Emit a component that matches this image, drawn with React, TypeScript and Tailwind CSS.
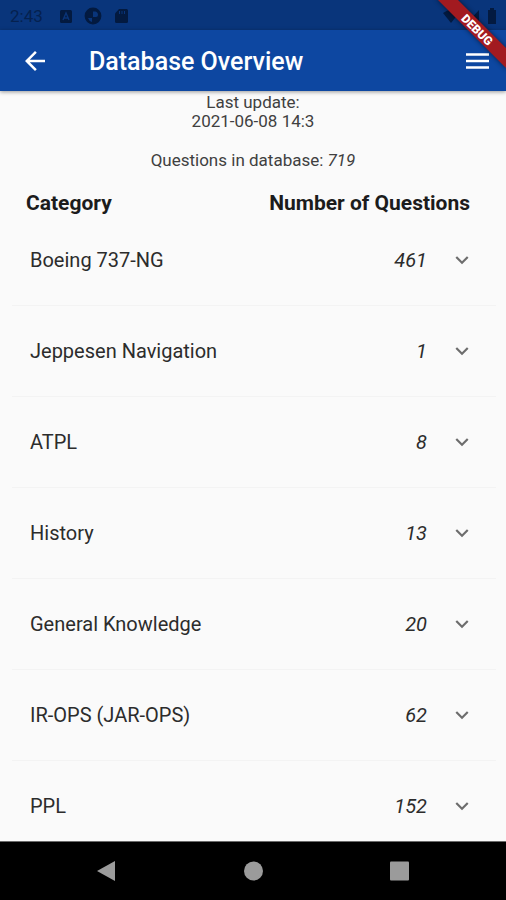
const categories = [
  { name: "Boeing 737-NG", count: 461 },
  { name: "Jeppesen Navigation", count: 1 },
  { name: "ATPL", count: 8 },
  { name: "History", count: 13 },
  { name: "General Knowledge", count: 20 },
  { name: "IR-OPS (JAR-OPS)", count: 62 },
  { name: "PPL", count: 152 },
];

function StatusBar() {
  return (
    <div className="flex h-[30px] shrink-0 items-center bg-[#09357b] pl-[10px] pr-2 pt-px text-[#05214f]">
      <span className="w-[49px] text-[17px] leading-5">2:43</span>
      <div className="flex items-center gap-[11px]">
        <svg className="size-[14px]" viewBox="0 0 14 14" aria-hidden="true">
          <rect x="1" y="1" width="12" height="13" rx="1.5" fill="#031a40" />
          <path d="M4 11 7 4l3 7M5 9h4" fill="none" stroke="#0a3478" strokeWidth="1.4" />
        </svg>
        <svg className="size-[18px]" viewBox="0 0 18 18" aria-hidden="true">
          <circle cx="9" cy="9" r="7.6" fill="#031a40" stroke="#031a40" strokeWidth="1.6" />
          <path d="M9 4.500h2.500Q14 5 14 8q0 2-2 2H9zM4 11h4v4Q5 14 4 11z" fill="#09357b" />
        </svg>
        <svg className="size-4" viewBox="0 0 16 16" aria-hidden="true">
          <path d="M6 1h7.500Q15 1 15 2.500v11q0 1.500-1.500 1.500h-10Q2 15 2 13.500V5.500z" fill="#031a40" />
          <path d="M6.500 3v3M9 3v3M11.500 3v3" stroke="#09357b" strokeWidth="1" />
        </svg>
      </div>
      <svg className="ml-auto h-[18px] w-[56px]" viewBox="0 0 56 18" aria-hidden="true">
        <path d="M1 6Q9 0 17 6L9 16z" fill="#031a40" />
        <path d="M37 3v12H26z" fill="#031a40" />
        <path d="M46 3h2V1h4v2h2v14h-8z" fill="#031a40" />
      </svg>
    </div>
  );
}

function DebugBanner() {
  return (
    <svg
      className="pointer-events-none absolute right-0 top-0 z-20 size-[78px]"
      viewBox="0 0 78 78"
      role="img"
      aria-label="Debug"
    >
      <defs>
        <filter id="shade" x="-20%" y="-20%" width="140%" height="140%">
          <feGaussianBlur stdDeviation="2.500" />
        </filter>
      </defs>
      <path d="M8-2 80 70V50L28-2z" fill="#000" opacity=".55" filter="url(#shade)" />
      <path d="M8-2 80 70V50L28-2z" fill="#a21a20" />
      <text
        transform="translate(49 30) rotate(45)"
        y="4"
        textAnchor="middle"
        fill="#fff"
        fontFamily="Roboto, sans-serif"
        fontSize="12"
        fontWeight="900"
      >
        DEBUG
      </text>
    </svg>
  );
}

function AppBar() {
  return (
    <header className="z-10 flex h-[61px] shrink-0 items-center bg-[#0d47a1] pl-5 pr-[14px] pt-px text-white shadow-[0_1px_4px_rgba(0,0,0,0.4)]">
      <button type="button" aria-label="Back" className="size-[30px]">
        <svg viewBox="0 0 24 24" fill="currentColor" aria-hidden="true">
          <path d="M20 11H7.830l5.590-5.590L12 4l-8 8 8 8 1.410-1.410L7.830 13H20z" />
        </svg>
      </button>
      <h1 className="ml-[39px] flex-1 pt-0.5 text-[25px] font-medium leading-8">Database Overview</h1>
      <button type="button" aria-label="Open menu" className="size-[30px]">
        <svg viewBox="0 0 30 30" stroke="currentColor" strokeWidth="2.5" aria-hidden="true">
          <path d="M4 8.500h23M4 15h23M4 21.500h23" />
        </svg>
      </button>
    </header>
  );
}

function CategoryRow({ name, count }: { name: string; count: number }) {
  return (
    <li className="border-b border-[#f3f3f3]">
      <button
        type="button"
        aria-expanded="false"
        className="flex h-[90px] w-full items-center pl-[18px] pr-[21px] text-left text-[20px] leading-6"
      >
        <span className="flex-1">{name}</span>
        <em>{count}</em>
        <svg
          className="ml-[22px] size-[26px] text-[#6d6d6d]"
          viewBox="0 0 24 24"
          fill="currentColor"
          aria-hidden="true"
        >
          <path d="M16.590 8.590 12 13.170 7.410 8.590 6 10l6 6 6-6z" />
        </svg>
      </button>
    </li>
  );
}

function NavigationBar() {
  return (
    <nav className="flex h-[59px] shrink-0 items-center justify-center gap-[116px] border-t border-[#6b6b6b] bg-black text-[#9b9b9b]">
      <button type="button" aria-label="System back" className="size-[30px]">
        <svg viewBox="0 0 30 30" fill="currentColor" aria-hidden="true">
          <path d="M23 5v20L5 15z" />
        </svg>
      </button>
      <button type="button" aria-label="Home" className="size-[30px]">
        <svg viewBox="0 0 30 30" fill="currentColor" aria-hidden="true">
          <circle cx="15.500" cy="15" r="9.500" />
        </svg>
      </button>
      <button type="button" aria-label="Recent apps" className="size-[30px]">
        <svg viewBox="0 0 30 30" fill="currentColor" aria-hidden="true">
          <rect x="6" y="5.500" width="19" height="19" rx="1" />
        </svg>
      </button>
    </nav>
  );
}

export default function App() {
  return (
    <div className="relative flex h-screen flex-col overflow-hidden bg-[#fafafa] font-[Roboto,sans-serif] text-[#2c2c2c]">
      <StatusBar />
      <AppBar />
      <main className="min-h-0 flex-1 overflow-hidden">
        <div className="pt-0.5 text-center text-[17px] leading-[19px] text-[#404040]">
          <p>Last update:</p>
          <p>2021-06-08 14:3</p>
          <p className="mt-5">
            Questions in database: <em>719</em>
          </p>
        </div>
        <div className="mt-[21px] flex justify-between pl-[26px] pr-9 text-[21px] font-bold leading-6 text-[#1c1c1c]">
          <h2>Category</h2>
          <h2>Number of Questions</h2>
        </div>
        <ul className="pl-3 pr-[10px]">
          {categories.map((category) => (
            <CategoryRow key={category.name} name={category.name} count={category.count} />
          ))}
        </ul>
      </main>
      <NavigationBar />
      <DebugBanner />
    </div>
  );
}
